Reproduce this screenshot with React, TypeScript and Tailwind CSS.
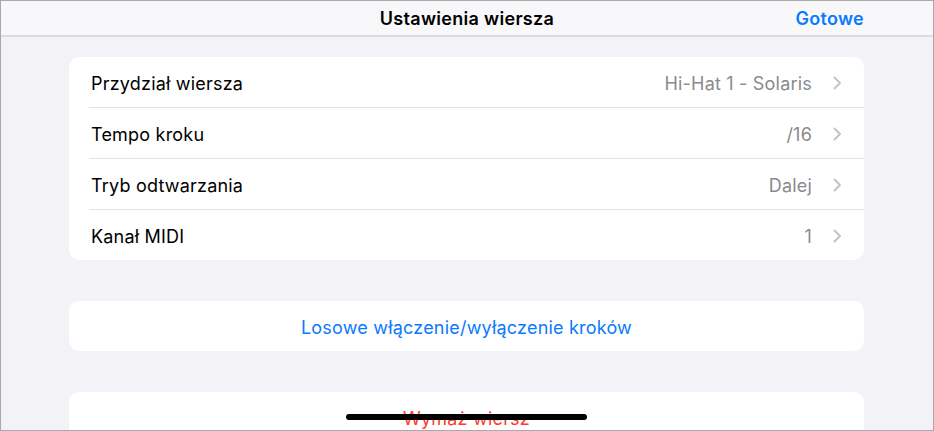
const rows = [
  { label: "Przydział wiersza", value: "Hi-Hat 1 - Solaris" },
  { label: "Tempo kroku", value: "/16" },
  { label: "Tryb odtwarzania", value: "Dalej" },
  { label: "Kanał MIDI", value: "1" },
];

function Chevron() {
  return (
    <svg
      width="9"
      height="14"
      viewBox="0 0 9 14"
      fill="none"
      className="ml-[21px] shrink-0"
    >
      <path
        d="M1.5 1.5 L7 7 L1.5 12.5"
        stroke="#c4c4c7"
        strokeWidth="2"
        strokeLinecap="round"
        strokeLinejoin="round"
      />
    </svg>
  );
}

export default function App() {
  return (
    <div
      className="relative w-[934px] h-[431px] overflow-hidden border border-[#a9a9ab] bg-[#f2f2f7] flex flex-col"
      style={{ fontFamily: "Inter, 'Liberation Sans', sans-serif" }}
    >
      {/* Nav bar */}
      <div className="h-[36px] shrink-0 bg-[#f8f8fa] border-b-2 border-[#dcdce0] flex items-center justify-center relative">
        <span className="pt-[1px] text-[18px] font-semibold text-black tracking-[0.3px]">
          Ustawienia wiersza
        </span>
        <span className="absolute right-[69px] pt-[1px] text-[18px] font-semibold text-[#0a7aff] tracking-[0.3px]">
          Gotowe
        </span>
      </div>

      <div className="flex flex-col gap-[41px] pt-[20px] pl-[68px] pr-[69px]">
        {/* Settings list */}
        <div className="bg-white rounded-[10px] overflow-hidden">
          {rows.map((row, i) => (
            <div key={row.label} className="pl-[20px]">
              <div
                className={`flex items-center pr-[22px] pt-[2px] ${
                  i < rows.length - 1 ? "border-b border-[#e4e4e7] h-[51px]" : "h-[50px]"
                }`}
              >
                <span className="pl-[2px] text-[18px] text-black tracking-[0.2px]">
                  {row.label}
                </span>
                <span className="ml-auto text-[18px] text-[#8a8a8e] tracking-[0.2px]">
                  {row.value}
                </span>
                <Chevron />
              </div>
            </div>
          ))}
        </div>

        {/* Randomize */}
        <div className="bg-white rounded-[10px] h-[50px] flex items-center justify-center pt-[2px]">
          <span className="text-[18px] text-[#0a7aff] tracking-[0.2px]">
            Losowe włączenie/wyłączenie kroków
          </span>
        </div>

        {/* Delete */}
        <div className="bg-white rounded-[10px] h-[50px] flex items-center justify-center pt-[2px]">
          <span className="text-[18px] text-[#ff3b30] tracking-[0.2px]">
            Wymaż wiersz
          </span>
        </div>
      </div>

      {/* Home indicator */}
      <div className="absolute bottom-[10px] left-[345px] w-[241px] h-[6px] rounded-full bg-black" />
    </div>
  );
}
